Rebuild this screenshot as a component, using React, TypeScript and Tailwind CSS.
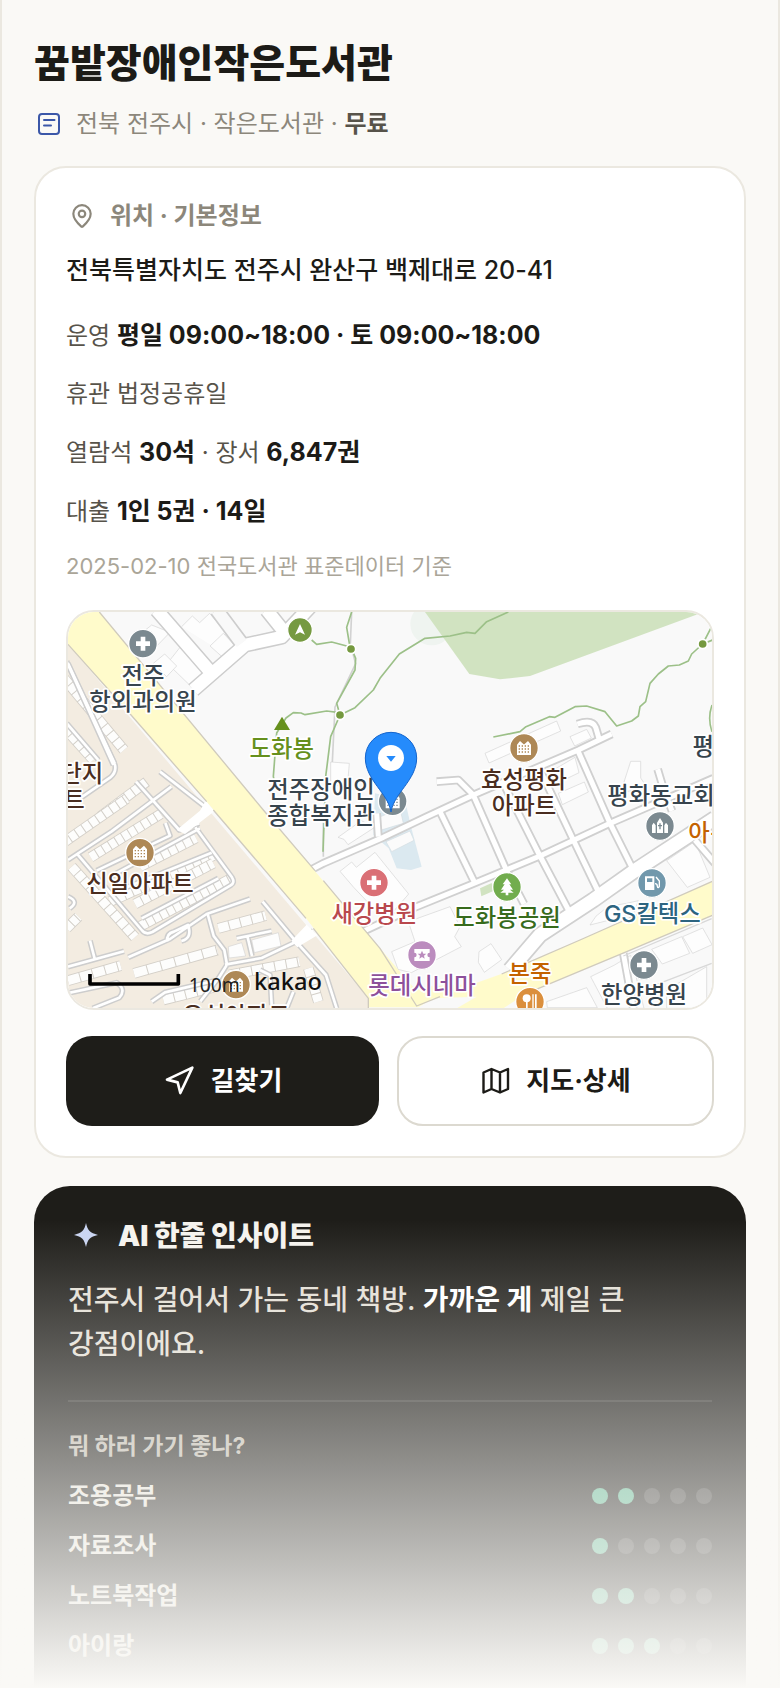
import React from 'react';
import { MapPin, Navigation } from 'lucide-react';

const activities = [
  { name: '조용공부', score: 2 },
  { name: '자료조사', score: 1 },
  { name: '노트북작업', score: 2 },
  { name: '아이랑', score: 3 },
];

const NoteIcon = () => (
  <svg className="size-7" viewBox="0 0 28 28" fill="none" stroke="#3b57a8" strokeWidth="2" strokeLinecap="round">
    <rect x="5" y="4" width="20" height="20" rx="3" />
    <path d="M10 10h10.500M10 15.500h7" />
  </svg>
);

const MapIcon = () => (
  <svg className="size-8" viewBox="0 0 32 32" fill="none" stroke="currentColor" strokeWidth="2.400" strokeLinejoin="round">
    <path d="M3.500 7.500l8-3.500 8.500 3.500 8-3.500v20l-8 3.500-8.500-3.500-8 3.500zM11.500 4v20M20 7.500v20" />
  </svg>
);

const SparkIcon = () => (
  <svg className="size-9" viewBox="0 0 36 36" fill="#c9d4f1">
    <path d="M18 5c1.600 7.600 4 9.600 12 12-8 1.800-10.400 4.400-12 12-1.600-7.600-4-10.200-12-12 8-2.400 10.400-4.400 12-12z" />
  </svg>
);

/* ---------- map ---------- */

const trails = [
  'M755 120l15 13 45-7 45 12 13 9M875 36l-15 46 8 48 19 45-2 35-55 100 10 35-28 65-15 120-8 225',
  'M840 345l45-22 55-53 20-35 58-73 77-47 75-7 50-11 25 3 35-35 65-29',
  'M838 338l-38-5-65 11-12-5-23-1-22 16-28 45-10 130 8 40',
  'M1300 411l80-16 18-15 70-30 17 2 60-32 35-2 55 17 35 43 45-15 20-15 5-28 17-15 13-55 25-28 30-24 33-3 27-12 10-21 33-30 27-52M1928 132l30-12M1956 315q-14 40 0 80',
];

const sideRoads = [
  'M1655 402l-100 48-315 135-140 65-130 62-180 78-50 26',
  'M880 1008l185-86 165-67 210-87 210-98 310-135',
  'M1140 635l105 215',
  'M1130 545l65-5 45 45 100 227 52 100',
  'M1330 550l110 218 87 165',
  'M1445 520l95 200 75 155',
  'M1555 455l95 215 65 130',
  'M1552 372q45-15 55 10l12 40',
  'M1793 508l18 60 25 65',
  'M950 515v30M950 640l5 70',
  'M1905 720l60 70M1690 1060l30 165',
];

const estateRoads = [
  'M20 185l145 310q5 22-15 38l-130 90M20 185l140 310',
  'M24 190l140 300M20 370l95 110M300 515l135 105',
  'M228 545l130 145 60-20',
  'M50 760l195 230q12 16 32 6l235-140q14-8 4-24l-110-150',
  'M24 780l130-85 180-135M110 812l220-105-14-38',
  'M150 830l270-145M185 868l270-110M245 955l230-120',
  'M205 1072l125-55 110-75 130-45M322 1025q-4-24 20-30l42-20q14 40-20 48',
  'M443 942l18 66 32 42 8 44-25 40-55 70M495 1094l110-20 95-45 60-36',
  'M608 905l100 120 90 100 32 100M24 1100l168-46M90 1022l14 54',
  'M530 1015l105-22M562 1008l14 60M24 890q35 15 5 35',
  'M20 1180l150-32q30 20 8 45l-80 32M275 1205l40-28 150-35M600 1110l30 15 5 90M680 1225l20-50',
];

// rows of identical housing blocks: path, block length
const blockRows: [string, string][] = [
  ['M12 235l180 215', '24 3'],
  ['M15 385l85 95', '24 3'],
  ['M120 650l140-105', '22 3'],
  ['M10 728l190-132', '22 3'],
  ['M92 772l210-130', '20 3'],
  ['M240 800l168-86', '22 3'],
  ['M150 905l310-138', '22 3'],
  ['M225 912l235-122', '22 3'],
  ['M242 978l270-142', '20 3'],
  ['M35 800l190 212', '24 3'],
  ['M20 985l35-35', '20 3'],
  ['M475 985l142-38', '32 3'],
  ['M222 1120l250-70', '40 3'],
  ['M24 1142l158-45', '36 3'],
  ['M508 1125l210-40', '32 3'],
  ['M745 1105l30 100', '24 3'],
  ['M310 1200l150-38', '32 3'],
];

const buildings = [
  'M225 115l50-40 55 22-58 60z',
  'M330 180l30-38 76 80-40 40-62-60z',
  'M365 80l32-32 22 20 30-28 50 60-45 36',
  'M450 138l40-38 40 42-35 36z',
  'M280 190l34-28 36 36-30 32z',
  'M812 486l56 4-6 70-50-6z',
  'M1275 460l215-97 12 30-215 96z',
  'M1530 410l50-22 14 26-50 24z',
  'M1480 510l65-38 12 46-70 34z',
  'M1495 580l78-34 12 30-78 38z',
  'M834 712l70-50 40 20-80 52-12-16z',
  'M840 814l35-28 14 16 56-45 101 125-70 80-95-100z',
  'M1712 484h30v50l20 30-60 10-10-28z',
  'M995 1055l70-30-20-60 125-45 30 60-16 30 20 30-150 78-40-10z',
  'M1257 1055l36-24 32 48-52 38-18-30z',
  'M1820 782l85-58 45 108-68 30z',
  'M1590 975q30-60 110-65l35-8-15 40z',
  'M1592 1130l70-34 50-30 40 159h-110z',
  'M1775 1048l90-38 24 50-82 32z',
  'M1868 1010l60-26 28 50-58 26z',
  'M1460 1205l120-42 32 60h-150z',
  'M1820 1170l120-70v125h-120z',
  'M505 1040l40-12 12 40-50 6z',
  'M575 1020l80-22 8 40-80 20z',
];

const labels = [
  { x: 249, y: 252, lines: ['전주', '항외과의원'], fill: '#37444d' },
  { x: 665, y: 471, lines: ['도화봉'], fill: '#66901d' },
  { x: 783, y: 594, lines: ['전주장애인', '종합복지관'], fill: '#37444d' },
  { x: 1392, y: 563, lines: ['효성평화', '아파트'], fill: '#4a2d20' },
  { x: 1803, y: 612, lines: ['평화동교회'], fill: '#37444d' },
  { x: 1930, y: 466, lines: ['평'], fill: '#37444d' },
  { x: 65, y: 546, lines: ['단지'], fill: '#4a2d20' },
  { x: 42, y: 624, lines: ['트'], fill: '#4a2d20' },
  { x: 240, y: 877, lines: ['신일아파트'], fill: '#4a2d20' },
  { x: 943, y: 965, lines: ['새강병원'], fill: '#b9484d' },
  { x: 1341, y: 978, lines: ['도화봉공원'], fill: '#376b1c' },
  { x: 1777, y: 965, lines: ['GS칼텍스'], fill: '#2d6480' },
  { x: 1933, y: 722, lines: ['아-'], fill: '#c46200' },
  { x: 1410, y: 1145, lines: ['본죽'], fill: '#c46200' },
  { x: 1086, y: 1182, lines: ['롯데시네마'], fill: '#8d509b' },
  { x: 1752, y: 1210, lines: ['한양병원'], fill: '#37444d' },
  { x: 528, y: 1271, lines: ['우성아파트'], fill: '#4a2d20' },
];

const glyphs = {
  cross: <path d="M-7-21H7V-7H21V7H7V21H-7V7H-21V-7H-7z" fill="#fff" />,
  compass: <path d="M0-18L15 14 0 7-15 14z" fill="#fff" />,
  apartment: (
    <g>
      <path d="M-21 21V-10L-12-21-1-11 1-11 12-21 21-10V21z" fill="#fff" />
      <path d="M-16-6H18M-16 3H18M-16 12H18" stroke="currentColor" strokeWidth="4" strokeDasharray="4 5" />
    </g>
  ),
  tree: <path d="M0-26L13-8H7L18 8H9L20 17H4V25H-4V17H-20L-9 8H-18L-7-8H-13z" fill="#fff" />,
  ticket: (
    <g>
      <path d="M-23-18H23V-7a7 7 0 0 0 0 14V18H-23V7a7 7 0 0 0 0-14z" fill="#fff" />
      <path d="M0-13L4-4 13-4 6 2 8 11 0 6-8 11-6 2-13-4-4-4z" fill="currentColor" />
    </g>
  ),
  fuel: (
    <g>
      <path d="M-21-20H7V21H-21z" fill="#fff" />
      <path d="M-15-14H1V-3H-15z" fill="currentColor" />
      <path d="M9 2q7 0 7 8 2 8 6 0V-6L12-18" fill="none" stroke="#fff" strokeWidth="4" />
    </g>
  ),
  church: (
    <g>
      <path d="M-9 21V-10L0-24 9-10V21zM-24 21V-2l5-8 6 8V21zM13 21V-2l5-8 6 8V21z" fill="#fff" />
      <path d="M0-8V10M-6-1H6" stroke="currentColor" strokeWidth="4" />
    </g>
  ),
  food: (
    <g fill="#fff">
      <circle cx="-10" cy="-10" r="12" />
      <path d="M-12 0h5v30h-5zM7-22h4v50H7zM15-22h5v50h-5z" />
    </g>
  ),
};

const pois: { x: number; y: number; r: number; color: string; glyph: keyof typeof glyphs }[] = [
  { x: 249, y: 131, r: 42, color: '#7b8990', glyph: 'cross' },
  { x: 720, y: 90, r: 36, color: '#769a41', glyph: 'compass' },
  { x: 1392, y: 444, r: 42, color: '#ae8856', glyph: 'apartment' },
  { x: 240, y: 758, r: 42, color: '#ae8856', glyph: 'apartment' },
  { x: 998, y: 604, r: 42, color: '#7b8990', glyph: 'apartment' },
  { x: 942, y: 848, r: 42, color: '#da6f75', glyph: 'cross' },
  { x: 1341, y: 861, r: 42, color: '#72ad4e', glyph: 'tree' },
  { x: 1086, y: 1065, r: 42, color: '#bb8cbe', glyph: 'ticket' },
  { x: 1776, y: 849, r: 42, color: '#7198ac', glyph: 'fuel' },
  { x: 1800, y: 678, r: 42, color: '#7b8990', glyph: 'church' },
  { x: 1752, y: 1095, r: 42, color: '#7b8990', glyph: 'cross' },
  { x: 1410, y: 1205, r: 42, color: '#db8f3d', glyph: 'food' },
  { x: 528, y: 1154, r: 42, color: '#ae8856', glyph: 'apartment' },
];

const LocationMap = () => (
  <svg
    className="block h-full w-full"
    viewBox="24 36 1932 1188"
    preserveAspectRatio="xMidYMid slice"
    fill="none"
    strokeLinejoin="round"
    role="img"
    aria-label="도서관 위치 지도"
  >
    <path d="M0 0H1980V1250H0z" fill="#f9f9f9" />
    <path d="M24 133L925 1195V1250H0V110z" fill="#f3ece1" />
    <circle cx="1115" cy="72" r="64" fill="#eff4f0" />
    <path d="M1095 36l133 186 92 16 90-10 505-186V30z" fill="#d1e3c1" />
    <path d="M945 580l90 20 18 80 32 120-32 10-43-5-24-60-46-40z" fill="#dbe9f0" />
    <path d="M950 655l70-30 10 45-66 20zM978 725l72-32 12 28-67 34z" fill="#fbfbfb" stroke="#d3dde1" strokeWidth="2" />
    <path d="M1260 865l35-16 5 24-36 16z" fill="#d1e3c1" />

    <g fill="#fdfdfd" stroke="#d4d4d4" strokeWidth="2">
      {buildings.map((d) => <path key={d} d={d} />)}
    </g>

    {/* housing estate */}
    {blockRows.map(([d, dash]) => (
      <g key={d}>
        <path d={d} stroke="#d3cfc8" strokeWidth="32" />
        <path d={d} stroke="#fdfdfc" strokeWidth="27" strokeDasharray={dash} />
      </g>
    ))}
    <g stroke="#cdcdcd" strokeWidth="17">{estateRoads.map((d) => <path key={d} d={d} />)}</g>
    <g stroke="#fff" strokeWidth="8">{estateRoads.map((d) => <path key={d} d={d} />)}</g>

    {/* side streets */}
    <g stroke="#d0d0d0" strokeWidth="26">{sideRoads.map((d) => <path key={d} d={d} />)}</g>
    <path d="M400 270l155-135 110-24 85-90M290 30l165 190M620 30l60 75M470 30l75 100" stroke="#cdcdcd" strokeWidth="46" />
    <path d="M1965 655l-245 160-120 85-160 105-90 105" stroke="#d0d0d0" strokeWidth="50" />
    <path d="M400 270l155-135 110-24 85-90M290 30l165 190M620 30l60 75" stroke="#fff" strokeWidth="37" />
    <path d="M470 30l75 100" stroke="#f9f9f9" strokeWidth="36" />
    <g stroke="#fff" strokeWidth="15">{sideRoads.map((d) => <path key={d} d={d} />)}</g>
    <path d="M1965 655l-245 160-120 85-160 105-90 105" stroke="#fff" strokeWidth="40" />
    <path d="M350 690l70-58 17-30 26 32-88 68zM694 1022l46-48 32 32-60 36z" fill="#fff" />
    <path d="M875 36l-4 95 16 60-62 130-8 165M790 770V640" stroke="#d2d2d2" strokeWidth="5" />
    <path d="M1690 1068l265-112M1720 1180l235-90" stroke="#d8d8d8" strokeWidth="4" />

    {/* main roads */}
    <path
      d="M24 36H118L610 630 990 1080 1060 1162 1240 1152 1330 1120 1560 1020 1960 843V945L1700 1055 1400 1180 1330 1225H1190L1250 1190 1120 1195 1075 1222H925V1195L738 955 440 605 200 330 24 133z"
      fill="#fffbcb"
    />
    <path
      d="M118 36L610 630 765 812M790 842L960 1045 1070 1218 1140 1190M24 133L200 330 440 605M460 630L738 955M760 985L925 1195V1225M1325 1122L1560 1020 1960 843M1960 945L1700 1055 1400 1180"
      stroke="#d0cbbd"
      strokeWidth="4"
    />

    <g stroke="#9cc088" strokeWidth="5">{trails.map((d) => <path key={d} d={d} />)}</g>
    <g fill="#75993f" stroke="#fff" strokeWidth="5">
      <circle cx="873" cy="147" r="14" />
      <circle cx="840" cy="345" r="14" />
      <circle cx="1928" cy="132" r="14" />
    </g>
    <path d="M666 350l24 40h-48z" fill="#66901d" />

    {pois.map(({ x, y, r, color, glyph }) => (
      <g key={`${x}-${y}`} transform={`translate(${x} ${y})`} color={color}>
        <circle r={r + 1} fill={color} stroke="#fff" strokeWidth="4" />
        {glyphs[glyph]}
      </g>
    ))}

    <g
      className="font-['Inter','Noto_Sans_CJK_KR',sans-serif] font-medium"
      fontSize="70"
      textAnchor="middle"
      stroke="#fff"
      strokeWidth="10"
      paintOrder="stroke"
    >
      {labels.map(({ x, y, lines, fill }) =>
        lines.map((line, i) => (
          <text key={`${line}-${x}`} x={x} y={y + i * 78} fill={fill}>{line}</text>
        ))
      )}
    </g>

    {/* current place */}
    <path d="M993 636C985 580 916 540 916 474a77 77 0 0 1 154 0c0 66-69 106-77 162z" fill="#258bfc" stroke="#1464cc" strokeWidth="3" />
    <circle cx="993" cy="474" r="39" fill="#fff" />
    <path d="M979 468h28l-14 17z" fill="#258bfc" />

    <path d="M90 1122v30h265v-30" stroke="#000" strokeWidth="11" />
    <text x="386" y="1175" fontSize="58" fill="#222" className="font-['Noto_Sans',sans-serif]">100m</text>
    <text x="582" y="1170" fontSize="71" fill="#111" className="font-['Noto_Sans',sans-serif] font-medium">kakao</text>
  </svg>
);

/* ---------- page ---------- */

interface ScoreDotsProps {
  score: number;
}

const ScoreDots: React.FC<ScoreDotsProps> = ({ score }) => (
  <div className="flex gap-2.5" role="img" aria-label={`5점 만점에 ${score}점`}>
    {[1, 2, 3, 4, 5].map((n) => (
      <span key={n} className={n <= score ? 'size-4 rounded-full bg-[#5cb48f]' : 'size-4 rounded-full bg-white/15'} />
    ))}
  </div>
);

const LocationCard = () => (
  <section className="rounded-[32px] border-2 border-[#ebe8e0] bg-white p-[30px] text-2xl leading-9 text-[#57534a]">
    <h2 className="flex items-center gap-3 text-2xl leading-9 font-bold text-[#8c877b]">
      <span className="flex size-8 items-center justify-center">
        <MapPin className="size-[26px]" />
      </span>
      위치 · 기본정보
    </h2>
    <p className="mt-4 text-[25px] leading-10 font-medium text-[#1c1b17]">전북특별자치도 전주시 완산구 백제대로 20-41</p>
    <div className="mt-[27px] flex flex-col gap-[22px] [&_b]:text-[25px] [&_b]:font-bold [&_b]:text-[#1c1b17]">
      <p>운영 <b>평일 09:00~18:00 · 토 09:00~18:00</b></p>
      <p>휴관 법정공휴일</p>
      <p>열람석 <b>30석</b> · 장서 <b>6,847권</b></p>
      <p>대출 <b>1인 5권 · 14일</b></p>
    </div>
    <p className="mt-5 text-[22px] leading-8 text-[#aaa598]">2025-02-10 전국도서관 표준데이터 기준</p>
    <div className="mt-7 h-[400px] overflow-hidden rounded-[28px] border-2 border-[#ebe8e0]">
      <LocationMap />
    </div>
    <div className="mt-[26px] flex gap-[18px]">
      <button className="flex h-[90px] flex-1 items-center justify-center gap-4 rounded-[26px] bg-[#1e1d19] text-[26px] font-bold text-white">
        <Navigation className="size-8" strokeWidth={2} />
        길찾기
      </button>
      <button className="flex h-[90px] flex-1 items-center justify-center gap-3.5 rounded-[26px] border-2 border-[#dcd9d0] bg-white text-[26px] font-bold text-[#1c1b17]">
        <MapIcon />
        지도·상세
      </button>
    </div>
  </section>
);

const InsightCard = () => (
  <section className="mt-7 flex-1 rounded-t-[36px] bg-[#1e1d19] px-[34px] pt-[30px] pb-3">
    <h2 className="flex items-center gap-3.5 text-[28px] leading-10 font-black text-[#f5f3ee]">
      <SparkIcon />
      AI 한줄 인사이트
    </h2>
    <p className="mt-[22px] text-[28px] leading-[44px] font-medium text-[#e3dfd5]">
      전주시 걸어서 가는 동네 책방. <b className="font-bold text-white">가까운 게</b> 제일 큰<br />강점이에요.
    </p>
    <hr className="mt-[34px] border-t-2 border-white/10" />
    <h3 className="mt-7 text-[23px] leading-8 font-bold text-[#bdb8ac]">뭐 하러 가기 좋나?</h3>
    <ul className="mt-[9px] text-2xl leading-[50px] font-bold text-[#e6e3da]">
      {activities.map(({ name, score }) => (
        <li key={name} className="flex items-center justify-between">
          {name}
          <ScoreDots score={score} />
        </li>
      ))}
    </ul>
  </section>
);

export default function App() {
  return (
    <div className="relative font-['Inter','Noto_Sans_CJK_KR',sans-serif]">
      <main className="flex min-h-screen flex-col border-x-2 border-[#ebe8e0] bg-[#faf9f6] px-8 pt-8">
        <h1 className="text-[39px] leading-[62px] font-black text-[#1c1b17]">꿈밭장애인작은도서관</h1>
        <div className="mt-3 mb-6 flex items-center gap-3.5 text-2xl leading-9 text-[#8c877b]">
          <NoteIcon />
          <p>전북 전주시 · 작은도서관 · <b className="font-bold text-[#57534a]">무료</b></p>
        </div>
        <LocationCard />
        <InsightCard />
      </main>
      {/* fades the rest of the insight out */}
      <div className="pointer-events-none absolute inset-x-0 bottom-0 h-[468px] bg-linear-to-b from-[#faf9f6]/0 to-[#faf9f6]" />
    </div>
  );
}
